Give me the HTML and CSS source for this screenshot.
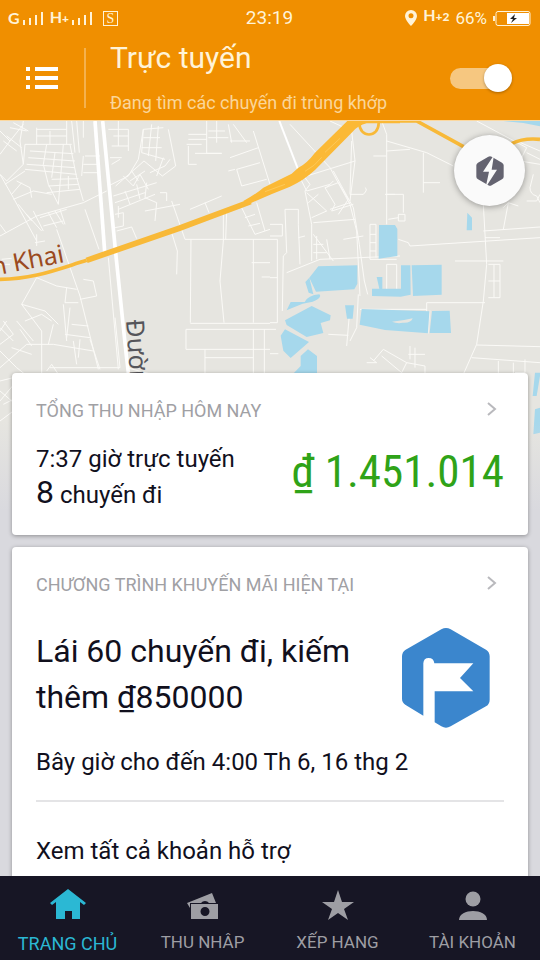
FILE: index.html
```html
<!DOCTYPE html>
<html lang="vi">
<head>
<meta charset="utf-8">
<meta name="viewport" content="width=device-width, initial-scale=1">
<title>Trực tuyến</title>
<link rel="stylesheet" href="styles.css">
</head>
<body>
<header class="header">
  <div class="status">
    <div class="status-side">
      <span class="net">G</span>
      <svg class="bars" viewBox="0 0 22 16" aria-hidden="true"><path d="M1 10h2v5H1zM7 8h2v7H7zM13 5h2v10h-2zM19 2h2v13h-2z"/></svg>
      <span class="net net-second">H<small>+</small></span>
      <svg class="bars" viewBox="0 0 22 16" aria-hidden="true"><path d="M1 10h2v5H1zM7 8h2v7H7zM13 5h2v10h-2zM19 2h2v13h-2z"/></svg>
      <span class="sim">S</span>
    </div>
    <span class="clock">23:19</span>
    <div class="status-side status-end">
      <svg class="pin" viewBox="0 0 12 16" aria-hidden="true"><path fill-rule="evenodd" d="M6 0a6 6 0 0 1 6 6c0 4-6 10-6 10S0 10 0 6a6 6 0 0 1 6-6zm0 3.200a2.500 2.500 0 1 0 0 5 2.500 2.500 0 0 0 0-5z"/></svg>
      <span class="net net-data">H<small>+2</small></span>
      <span class="percent">66%</span>
      <svg class="battery" viewBox="0 0 38 15" aria-hidden="true"><path d="M0 5h2v5H0z"/><rect x="3" y=".5" width="34" height="14" rx="2" fill="none" stroke="#fff3d8"/><path d="M14 2h22v11H14z" fill="#fff"/><path d="M22 3l-5 5h3l-2 4 6-5h-3z" fill="#222"/></svg>
    </div>
  </div>
  <div class="bar">
    <button class="menu" type="button" aria-label="Menu">
      <svg viewBox="0 0 32 22" aria-hidden="true"><path d="M0 0h4v4H0zM9 0h23v4H9zM0 9h4v4H0zM9 9h23v4H9zM0 18h4v4H0zM9 18h23v4H9z"/></svg>
    </button>
    <div class="bar-text">
      <h1>Trực tuyến</h1>
      <p>Đang tìm các chuyến đi trùng khớp</p>
    </div>
    <input class="switch" type="checkbox" role="switch" aria-label="Trực tuyến" checked>
  </div>
</header>

<main class="main">
  <svg class="map" viewBox="0 0 540 390" preserveAspectRatio="xMidYMin slice" aria-hidden="true">
    <defs>
      <linearGradient id="fade" x1="0" y1="0" x2="0" y2="1">
        <stop offset="0" stop-color="#d9d9de" stop-opacity="0"/>
        <stop offset="1" stop-color="#d9d9de"/>
      </linearGradient>
    </defs>
    <rect width="540" height="390" fill="#e6e5e0"/>
    <g transform="scale(.33333)">
      <g class="street">
        <path d="M0 30l30 30 40-50M10 60l40 30M20 45l45 35M0 100l30-40M70 0l-10 60 10 70-50 50-20-20M30 20l50 10M40 5l45 25M75 70h140M75 70l-5 60"/>
        <path d="M110 20v50M110 25h90M110 45h90M200 0v70M150 70v-40M215 0l10 95M230 0l8 95M250 0v50"/>
        <path d="M140 70l-10 60 15 60 30 60M90 90l130 8M85 110l140 10M80 130l145 10M75 145l155 15M190 70l-15 180M210 70l20 100 20 70M140 215l100-10M145 195l90-5M155 175l80-2M165 95l-10 75M205 165v40"/>
        <path d="M0 160l40 70 70 130M15 190l60-40M40 235l60-25 55 10M50 180l40 20 5 30M35 220l30-35M55 250l40 50M0 345l110-60 140-40 70-35M0 310l18 25M80 280l45 50M100 270l30 60M120 290l80-25M130 315l60-15M145 275l25 45M165 270l25 40M180 265l15 45M105 365l30-5M110 340v35"/>
        <path d="M255 105h45M250 130h50M250 155h50M250 105l-5 60M325 25h60v65M340 45h45M335 75h50M355 0v75M330 110h35M335 130l25-15M325 195l60-30 30-50 15-90 60-5M430 25l-5 70 70 20M455 10l-10 95M475 15l-8 105M430 50h50M425 80h60M505 25l22 110-40 30-55-45-85 75M370 165l30 30 20-35 25 45M390 180l45-30M395 150l20 30M450 155l45-20 15-20M470 165l20-55M340 225l130-40M345 245l90-30M355 265l110-45M375 210l15 40M410 190l10 45M440 185l-5 45 35 15-5 55M480 215h20v25M435 270l105-20M345 280l25-5v40l-25 5M355 255v35M350 330l45-12 15 35M515 240l40 115"/>
        <path d="M565 40h55M565 55h55M560 70h45M565 75v55h25M620 0v97h45M585 97h80M625 30h50M625 50h60M650 0v65M685 10l10 55M700 10l40 55M690 60h60M760 30l50 160M710 145l70-20M725 195l75-20M710 145l15 50M685 150l20-5M690 110l85-30M570 265l95-40M615 245l12 30"/>
        <path d="M555 355h255M573 355l-2 250M571 607h239M670 280v80l-10 120 12 125M680 275l-3 80M760 355v250M755 425h55M785 468h25M725 260l40 80 45-15M770 245l25 85M735 290l30-10M745 315l35-8M515 335l17 55-2 70M615 685v80M558 625h252M558 625v60h252M615 710h145M760 625v135M793 625v135"/>
        <path d="M255 265l42 120M170 325l70 200 55 220M110 470l-45 80 70 20 40 40M110 470l60 25 60 10M200 500l-5 45h40M240 535l50-10-10-45-30-5M65 550l60 80v150M75 600l50-20 30 20M0 740l80-70 80 0 120 20M190 550l10 110M210 560l-10 90M215 610l50 5M195 640l75 10M220 660l10 70M240 655l-5 55M270 655l30 90M160 610l-15 60M100 660l-50-60M10 600l30 40-40 30M0 620l40 40M20 600l-20 30M60 625l35 50M35 680l60 20M0 690l50 50 50 40M150 740h210M140 750l15-20 20 30M380 740l75 20M0 430h30M5 415l30-3"/>
        <path d="M325 410l30 335M345 590l15 150"/>
        <path d="M0 780l80-20M0 840l50-60M0 810l70 60M10 850l60-30M0 900l40-30"/>
      </g>
      <path d="M285 0l30 405" class="avenue"/><path d="M308 0l40 405 30 290 10 85" class="avenue"/>
      <path d="M0 475C100 474 165 447 260 418" class="road"/>
      <path d="M260 418L540 321 752 242" class="road wide"/>
    </g>
    <g transform="translate(270) scale(.33333)">
      <g class="street">
        <path d="M0 310h37v35H0M0 355h22v250H0M0 470h22M45 265h40v45l5 120M45 265l5 130-10 10-3 165M50 455l100-40 240-10M90 150l30 40-15 20 20 100v110M80 150l30 60 70-20M115 245l30-25M110 215l60 55-45 20M165 200l40-15 30 50-30 45M165 200l30 50-10 20 65-20M180 265l60-20M130 305l125-10M170 200l20-20M85 350l20-5M130 340l60 80M130 370h30M130 395h40M140 345v70M170 355l10 60"/>
        <path d="M60 10l120 130 60 110 20 80 10 195M190 150l60 110 18 110 15 110 10 40M350 310V40L335 0M180 0l65 30 10 90-15 120M110 165l145-45M245 60l-5 160h40q15-15 5-20M310 105h40M350 90l70-5M350 60l120 35 80 40M460 95v120M460 185h50M350 220h50v55M345 220h30M385 280h20v20h-20zM220 355l60-10M355 295l30-5M300 310v105h80M300 310h18v100M300 340h18M300 365h18M300 390h18M350 430h30v75M350 430v80M385 355l30 10 5 10 390-25M555 420h145M640 250l10 180-10 110-20 130-40 90M640 330l170-12M645 350h45M655 430h35v100h-35M672 430v100M655 480h35M470 545h175M470 545v40M270 565h200M175 640l60 3M240 560l-10 115M265 520l-5 100-20 40M620 672l190 5M605 710l205 15M685 720v50M730 725v45M765 715v40h-30"/>
        <path d="M700 260l15-15-15 80M715 245l30 10M770 95l40 20M770 80l-20 40 60 10M790 160l-10 40q0 20 20 25l10 20M770 240h30l10-20M740 60l70 30M620 0l150 80M340 685l70 40 55 10v35M340 685l-30 35M300 710l20 15M410 725l-15 30-60-50M420 675v40M435 680v60M415 700h50M0 625h18M0 698h25M290 725h30"/>
      </g>
      <path d="M28 0l60 155" class="avenue ramp"/>
      <g class="water">
        <path d="M327 312h48l7 12v81l-56 8zM592 275l14 15v38h-16zM145 436l117-3v55l-9 17-115 7-20-42zM118 470l12 50-14-5-10-32zM50 568l12-25h42q10-20 44-23 10 10-20 22l-30 6-30 12zM45 598l80-43 57 28-2 15-28 8 8 30-50 12-60-36zM45 625l72 38-55 48-22-22-8-45zM92 705l22-20 27 20v55H68l24-25zM393 433h28l1 88-30 6-86-2v-22h22l-8-35h17v35h56zM425 433l90-2v90l-86 4zM225 553h27l-4 40h-17zM275 564l205 7-5 66-130-10-76-16zM486 570l53-1 4 67h-64z"/>
        <path d="M700 0h110v16l-50-10zM795 755h15v10l-10 60h-12zM795 865l15-5v75l-20 5z"/>
      </g>
      <path d="M480 568l-5 70" stroke="#f2f1ee" stroke-width="3"/>
      <path d="M366 602q30-2 62-10-5 15-30 13-15 4-32-3z" fill="#e6e5e0"/>
      <path d="M268 6c0 46 58 46 58 0" fill="none" stroke="#f8b938" stroke-width="8"/>
      <path d="M300 0L440 0 590 82M725 68q35-18 85-13" class="road"/>
    </g>
    <g transform="translate(200 -2) scale(.33333)">
      <path d="M130 246q40-22 60-40l85-42 20-18q25-12 50-45L448 0h152v13H500q-25 5-45 28L345 153q-35 32-75 50-65 25-125 53z" fill="#fbb936"/>
      <path d="M195 218l60-22M315 157q30-16 50-42M375 100l45-42" fill="none" stroke="#fdd06a" stroke-width="2"/>
    </g>
    <text class="place place-road" transform="translate(-7 155) rotate(-11)">n Khai</text>
    <text class="place" transform="translate(126 199) rotate(86)">Đường</text>
    <rect y="300" width="540" height="90" fill="url(#fade)"/>
  </svg>
  <button class="boost" type="button" aria-label="Khu vực cao điểm">
    <svg viewBox="0 0 82 90" aria-hidden="true"><path d="M36 2q5-3 10 0l31 18q5 3 5 8v34q0 5-5 8L46 88q-5 3-10 0L5 70q-5-3-5-8V28q0-5 5-8z" fill="#646370"/><path d="M53-3L20 47h18L28 94l34-53H46z" fill="#fafafa"/></svg>
  </button>

  <div class="cards">
    <section class="card">
      <a class="card-head" href="#earnings">
        <h2>TỔNG THU NHẬP HÔM NAY</h2>
        <svg class="chevron" viewBox="0 0 12 16" aria-hidden="true"><path d="M2 2l7 6-7 6"/></svg>
      </a>
      <div class="earnings">
        <div class="stats">
          <p>7:37 giờ trực tuyến</p>
          <p><span class="count">8</span> chuyến đi</p>
        </div>
        <p class="amount">₫ 1.451.014</p>
      </div>
    </section>

    <section class="card">
      <a class="card-head" href="#promotions">
        <h2>CHƯƠNG TRÌNH KHUYẾN MÃI HIỆN TẠI</h2>
        <svg class="chevron" viewBox="0 0 12 16" aria-hidden="true"><path d="M2 2l7 6-7 6"/></svg>
      </a>
      <div class="promo">
        <p class="promo-title">Lái 60 chuyến đi, kiếm thêm ₫850000</p>
        <svg class="flag" viewBox="66 56 264 300" aria-hidden="true"><path d="M184 60q14-8 28 0l106 61q11 7 11 20v130q0 13-11 20l-106 60q-14 8-28 0l-20-12V246h116l-40-40 40-44H163q-2-16-17-16t-16 16v157l-53-32q-11-7-11-19V141q0-13 11-20z" fill="#3b86cd"/></svg>
      </div>
      <p class="date">Bây giờ cho đến 4:00 Th 6, 16 thg 2</p>
      <a class="all" href="#support">Xem tất cả khoản hỗ trợ</a>
    </section>
  </div>
</main>

<nav class="tabs">
  <a class="tab active" href="#home" aria-current="page">
    <svg viewBox="0 0 36 32" aria-hidden="true"><path d="M18 1l18 14-2 2-4-3v17h-8v-8h-7v8H6V14l-4 3-2-2z"/></svg>
    <span>TRANG CHỦ</span>
  </a>
  <a class="tab" href="#income">
    <svg viewBox="0 0 36 32" aria-hidden="true"><path d="M2 15l25-10 4 10h-7a5 5 0 0 0-8 0H5v5z"/><path fill-rule="evenodd" d="M6 16h27v15H6zM20 19a4.500 4.500 0 1 0 0 9 4.500 4.500 0 0 0 0-9z"/></svg>
    <span>THU NHÂP</span>
  </a>
  <a class="tab" href="#rating">
    <svg viewBox="0 0 36 32" aria-hidden="true"><path d="M18 2l4 12h12l-10 7 4 11-10-7-10 7 4-11-10-7h12z"/></svg>
    <span>XẾP HANG</span>
  </a>
  <a class="tab" href="#account">
    <svg viewBox="0 0 36 32" aria-hidden="true"><circle cx="18" cy="11" r="7.500"/><path d="M4 32c0-12 28-12 28 0z"/></svg>
    <span>TÀI KHOẢN</span>
  </a>
</nav>
</body>
</html>
```
FILE: styles.css
```css
* {
  box-sizing: border-box;
  margin: 0;
  padding: 0;
}

body {
  display: flex;
  flex-direction: column;
  height: 100vh;
  background: #d9d9de;
  color: #11101d;
  font-family: Roboto, "Noto Sans", sans-serif;
  font-size: 24px;
  line-height: 36px;
}

a {
  color: inherit;
  text-decoration: none;
}

button {
  border: 0;
  background: none;
  cursor: pointer;
}

svg {
  display: block;
  flex: none;
}

/* Header */
.header {
  flex: none;
  background: #f08f00;
  color: #fff3d8;
}

.status {
  display: grid;
  grid-template-columns: 1fr auto 1fr;
  align-items: center;
  height: 36px;
  padding: 0 9px 0 8px;
  line-height: 20px;
}

.status-side {
  display: flex;
  align-items: center;
  gap: 2px;
}

.status-end {
  justify-content: flex-end;
  gap: 6px;
}

.status svg {
  fill: #fff3d8;
}

.net {
  font-family: Lato, Roboto, sans-serif;
  font-size: 16px;
  font-weight: 700;
}

.net small {
  font-size: 12px;
  font-weight: 900;
}

.net-second {
  margin-left: 4px;
}

.net-data {
  padding-bottom: 4px;
}

.bars {
  width: 22px;
  height: 16px;
}

.sim {
  width: 15px;
  height: 15px;
  margin-left: 8px;
  border: 1px solid;
  font: 14px/13px "Liberation Serif", serif;
  text-align: center;
}

.clock {
  font-size: 19px;
}

.pin {
  width: 12px;
  height: 16px;
}

.percent {
  font-size: 17px;
}

.battery {
  width: 38px;
  height: 15px;
}

.bar {
  display: flex;
  align-items: center;
  height: 84px;
  padding: 0 28px 0 26px;
}

.menu {
  display: flex;
  align-items: center;
  height: 60px;
  padding-right: 26px;
  border-right: 2px solid #f5b14d;
  box-sizing: content-box;
}

.menu svg {
  width: 32px;
  height: 22px;
  fill: #fff;
}

.bar-text {
  display: grid;
  flex: 1;
  gap: 20px;
  padding-left: 24px;
}

.bar-text h1 {
  font-size: 30px;
  font-weight: 400;
  line-height: 30px;
}

.bar-text p {
  color: #fbd699;
  font-size: 18px;
  line-height: 20px;
}

.switch {
  display: flex;
  align-items: center;
  justify-content: flex-end;
  position: relative;
  width: 62px;
  height: 28px;
  appearance: none;
}

.switch::before {
  content: "";
  position: absolute;
  inset: 4px 6px 3px 0;
  border-radius: 11px;
  background: #f6c780;
}

.switch::after {
  content: "";
  position: relative;
  width: 28px;
  height: 28px;
  border-radius: 50%;
  background: #fff;
  box-shadow: 0 1px 3px rgb(0 0 0 / 30%);
}

/* Map */
.main {
  position: relative;
  flex: 1;
  min-height: 0;
  overflow-y: auto;
  scrollbar-width: none;
  border-top: 1px solid #fbd8a0;
}

.map {
  position: absolute;
  top: 0;
  left: 0;
  width: 100%;
  height: 390px;
}

.street {
  fill: none;
  stroke: #fbfaf7;
  stroke-width: 3;
}

.avenue {
  fill: none;
  stroke: #fff;
  stroke-width: 11;
}

.ramp {
  stroke-width: 6;
}

.road {
  fill: none;
  stroke: #f8b938;
  stroke-width: 11;
}

.wide {
  stroke-width: 17;
}

.water {
  fill: #a6d8ec;
}

.place {
  fill: #55555a;
  font: 25px "Noto Sans", sans-serif;
}

.place-road {
  fill: #9b4a20;
}

.boost {
  display: grid;
  place-items: center;
  position: absolute;
  top: 14px;
  right: 15px;
  width: 71px;
  height: 71px;
  border-radius: 50%;
  background: #fafafa;
  box-shadow: 0 1px 6px rgb(0 0 0 / 35%);
}

.boost svg {
  width: 28px;
  height: 30px;
}

/* Cards */
.cards {
  display: grid;
  gap: 12px;
  position: relative;
  margin-top: 252px;
  padding: 0 12px 12px;
  pointer-events: none;
}

.card {
  padding: 26px 24px 22px;
  border-radius: 4px;
  background: #fff;
  box-shadow: 0 1px 4px rgb(0 0 0 / 35%);
  pointer-events: auto;
}

.card-head {
  display: flex;
  align-items: center;
  justify-content: space-between;
  line-height: 24px;
}

.card-head h2 {
  color: #a0a0a4;
  font-size: 18px;
  font-weight: 400;
}

.chevron {
  width: 12px;
  height: 16px;
  margin-right: 6px;
  margin-bottom: 4px;
  fill: none;
  stroke: #b9b9bd;
  stroke-width: 2;
}

.earnings {
  display: flex;
  justify-content: space-between;
  padding-top: 18px;
}

.count {
  font-size: 32px;
  line-height: 24px;
}

.amount {
  color: #2fa318;
  font-family: "Roboto Condensed", "Liberation Sans Narrow", Roboto, sans-serif;
  font-size: 45px;
  line-height: 62px;
  white-space: nowrap;
}

.promo {
  display: flex;
  justify-content: space-between;
  padding: 31px 14px 16px 0;
}

.promo-title {
  max-width: 340px;
  font-size: 32px;
  line-height: 46px;
}

.flag {
  width: 88px;
  height: 100px;
}

.date {
  padding-bottom: 20px;
  border-bottom: 2px solid #e4e4e6;
}

.all {
  display: block;
  padding-top: 31px;
}

/* Bottom tabs */
.tabs {
  display: grid;
  grid-template-columns: repeat(4, 1fr);
  flex: none;
  height: 84px;
  background: #171625;
}

.tab {
  display: flex;
  flex-direction: column;
  align-items: center;
  gap: 10px;
  padding-top: 12px;
  color: #9e9ea4;
  font-size: 17px;
  line-height: 24px;
}

.tab svg {
  width: 36px;
  height: 32px;
  fill: currentColor;
}

.active {
  color: #2bb8d4;
  font-size: 18px;
  line-height: 28px;
}
```
